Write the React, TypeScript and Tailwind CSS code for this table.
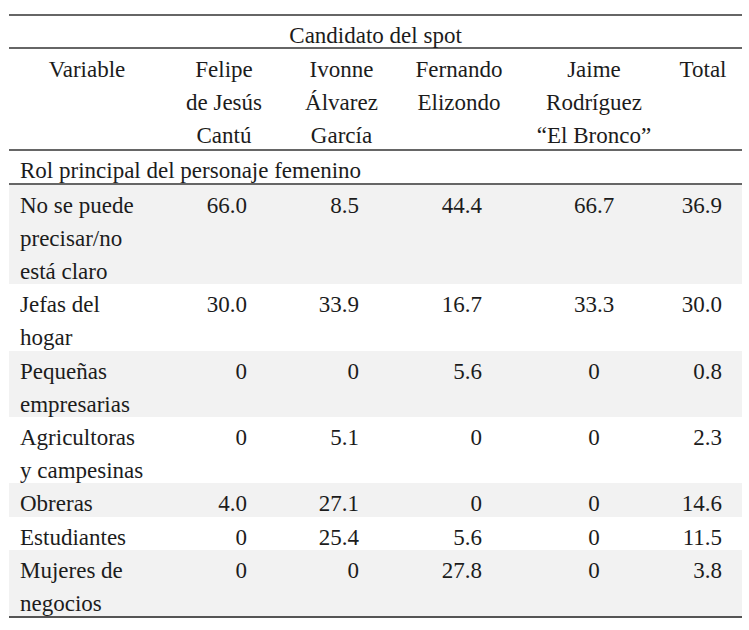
// accented letters are written as escapes to keep this file plain ASCII
const rows = [
  { label: ["No se puede", "precisar/no", "est\u00e1 claro"], vals: ["66.0", "8.5", "44.4", "66.7", "36.9"], shade: true },
  { label: ["Jefas del", "hogar"], vals: ["30.0", "33.9", "16.7", "33.3", "30.0"], shade: false },
  { label: ["Peque\u00f1as", "empresarias"], vals: ["0", "0", "5.6", "0", "0.8"], shade: true },
  { label: ["Agricultoras", "y campesinas"], vals: ["0", "5.1", "0", "0", "2.3"], shade: false },
  { label: ["Obreras"], vals: ["4.0", "27.1", "0", "0", "14.6"], shade: true },
  { label: ["Estudiantes"], vals: ["0", "25.4", "5.6", "0", "11.5"], shade: false },
  { label: ["Mujeres de", "negocios"], vals: ["0", "0", "27.8", "0", "3.8"], shade: true },
];

const headers = [
  ["Felipe", "de Jes\u00fas", "Cant\u00fa"],
  ["Ivonne", "\u00c1lvarez", "Garc\u00eda"],
  ["Fernando", "Elizondo"],
  ["Jaime", "Rodr\u00edguez", "\u201cEl Bronco\u201d"],
];

const valueCells = [
  "text-right pr-[36px]",
  "text-right pr-[41px]",
  "text-right pr-[36px]",
  "text-center",
  "text-right pr-[20px]",
];

// text in the source sits a few px low in its line box
function Lines({ lines }: { lines: string[] }) {
  return (
    <div className="translate-y-[4px]">
      {lines.map((l, i) => (
        <div key={i} className="whitespace-nowrap font-['Liberation_Serif',serif] font-normal">
          {l}
        </div>
      ))}
    </div>
  );
}

export default function App() {
  return (
    <div className="w-[749px] h-[630px] bg-white pt-[14px] px-[9px] font-['Liberation_Serif',serif] text-[23px] leading-[33.2px] text-[#1c1c1c]">
      <table className="w-[733px] table-fixed border-collapse">
        <colgroup>
          <col className="w-[156px]" />
          <col className="w-[118px]" />
          <col className="w-[117px]" />
          <col className="w-[118px]" />
          <col className="w-[152px]" />
          <col className="w-[72px]" />
        </colgroup>
        <thead>
          <tr className="border-t-2 border-b-2 border-[#666]">
            <th colSpan={6} className="font-normal text-center leading-[31px]">
              <Lines lines={["Candidato del spot"]} />
            </th>
          </tr>
          <tr className="border-b-2 border-[#666] align-top">
            <th className="font-normal text-center">
              <Lines lines={["Variable"]} />
            </th>
            {headers.map((h, i) => (
              <th key={i} className="font-normal text-center">
                <Lines lines={h} />
              </th>
            ))}
            <th className="font-normal text-center pr-[6px]">
              <Lines lines={["Total"]} />
            </th>
          </tr>
        </thead>
        <tbody>
          <tr className="border-b-2 border-[#666]">
            <td colSpan={6} className="pl-[11px] leading-[32px]">
              <Lines lines={["Rol principal del personaje femenino"]} />
            </td>
          </tr>
          {rows.map((r, i) => (
            <tr key={i} className={`align-top ${r.shade ? "bg-[#f2f2f2]" : "bg-white"}`}>
              <td className="pl-[11px]">
                <Lines lines={r.label} />
              </td>
              {r.vals.map((v, j) => (
                <td key={j} className={valueCells[j]}>
                  <Lines lines={[v]} />
                </td>
              ))}
            </tr>
          ))}
        </tbody>
      </table>
      <div className="h-[2px] w-[733px] bg-[#555]" />
    </div>
  );
}
